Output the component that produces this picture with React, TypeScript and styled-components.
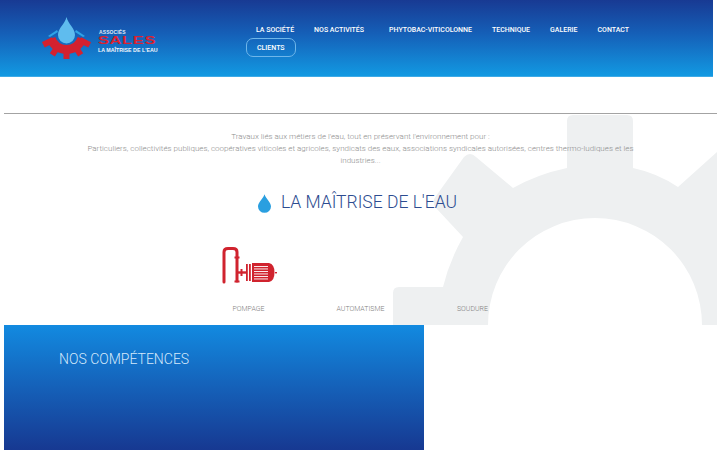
import React from "react";
import styled, { createGlobalStyle } from "styled-components";

const GlobalStyle = createGlobalStyle`
  html, body {
    margin: 0;
    padding: 0;
    background: #fff;
    height: 450px;
    overflow: hidden;
  }
  body {
    font-family: Roboto, "Liberation Sans", sans-serif;
  }
`;

const Page = styled.div`
  position: relative;
  width: 720px;
  height: 450px;
  overflow: hidden;
`;

const Header = styled.header`
  display: flex;
  width: 713px;
  height: 77px;
  box-sizing: border-box;
  padding-left: 42px;
  background: linear-gradient(180deg, #183a93 0%, #1560b8 45%, #1299e2 100%);
  border-bottom: 1px solid #3eaae6;
`;

const Logo = styled.div`
  display: flex;
  width: 204px;
  padding-top: 16px;
  align-items: flex-start;
`;

const LogoText = styled.div`
  display: flex;
  flex-direction: column;
  margin: 13px 0 0 6px;
  font-family: "Liberation Sans", Arial, sans-serif;
  font-weight: 700;
  color: #fff;
`;

const LogoSmall = styled.span`
  font-size: 5px;
  line-height: 6px;
  letter-spacing: 0.1px;
  color: #dfe9f5;
  margin-left: 1px;
`;

const LogoName = styled.span`
  font-size: 11px;
  line-height: 11px;
  letter-spacing: 0.4px;
  color: #dc2230;
  transform: scaleX(1.5);
  transform-origin: left center;
`;

const LogoTag = styled.span`
  font-size: 5.3px;
  line-height: 9px;
  white-space: nowrap;
  color: #f2f6fb;
`;

const Nav = styled.nav`
  display: flex;
  flex-wrap: wrap;
  align-content: flex-start;
  width: 420px;
  padding-top: 21px;
`;

const NavItem = styled.a<{ $boxed?: boolean; $extra?: number }>`
  display: flex;
  align-items: center;
  height: 17px;
  padding: 0 10px;
  margin-right: ${(p) => p.$extra ?? 0}px;
  font-size: 7px;
  font-weight: 500;
  text-transform: uppercase;
  white-space: nowrap;
  color: #fff;
  border: ${(p) => (p.$boxed ? "1px solid #6fb6ea" : "none")};
  border-radius: ${(p) => (p.$boxed ? "7px" : "0")};
`;

const Main = styled.main`
  width: 713px;
  margin-left: 4px;
`;

const Divider = styled.hr`
  margin: 36px 0 0;
  border: 0;
  border-top: 1px solid #a3a3a3;
`;

const GearBackdrop = styled.svg`
  position: absolute;
  left: 380px;
  top: 100px;
`;

const Intro = styled.p`
  position: relative;
  width: 552px;
  margin: 17px auto 0;
  font-size: 8px;
  font-weight: 300;
  line-height: 12px;
  text-align: center;
  color: #8d8d8d;
`;

const Title = styled.h1`
  position: relative;
  display: flex;
  align-items: center;
  justify-content: center;
  gap: 10px;
  margin: 23px 0 0;
  padding-right: 6px;
  height: 24px;
  font-size: 17.5px;
  font-weight: 300;
  white-space: nowrap;
  color: #2d4c90;
`;

const Drop = styled.svg`
  margin-top: 3px;
`;

const Skills = styled.div`
  position: relative;
  display: grid;
  grid-template-columns: repeat(3, 112px);
  justify-content: center;
  margin-top: 31px;
`;

const Skill = styled.div`
  display: flex;
  flex-direction: column;
  align-items: center;
  height: 80px;
`;

const SkillIcon = styled.div`
  height: 40px;
`;

const SkillLabel = styled.span`
  margin-top: 18px;
  font-size: 7px;
  font-weight: 300;
  line-height: 12px;
  color: #808080;
`;

const Panel = styled.section`
  position: relative;
  width: 420px;
  height: 140px;
  box-sizing: border-box;
  padding: 26px 0 0 55px;
  background: linear-gradient(180deg, #128ae0 0%, #1560b8 45%, #172f88 100%);
`;

const PanelTitle = styled.h2`
  margin: 0;
  font-size: 14px;
  font-weight: 300;
  line-height: 17px;
  white-space: nowrap;
  color: #d5e9fb;
`;

const LogoMark = () => (
  <svg width="50" height="46" viewBox="0 0 50 46">
    <g transform="translate(-42 -16)">
      <path d="M48 36 L57 30 L58 32 L50 37Z" fill="#2fa3e6" />
      <path d="M85 36 L76 30 L75 32 L83 37Z" fill="#2fa3e6" />
      <path d="M66.5 17 C68 24 75 28 75 35 A8.5 8.5 0 0 1 58 35 C58 28 65 24 66.5 17Z" fill="#5fbcee" />
      <g fill="#d4212f">
        <path d="M51 38.6 A16.5 16.5 0 0 0 82 38.6" fill="none" stroke="#d4212f" strokeWidth="9" />
        {[0, 33, -33, 63, -63].map((a) => (
          <rect key={a} x="63.5" y="48" width="6" height="11" transform={`rotate(${a} 66.5 33)`} />
        ))}
      </g>
    </g>
  </svg>
);

const PumpIcon = () => (
  <svg width="56" height="40" viewBox="221 246 56 40">
    <g fill="none" stroke="#d0232e">
      <path d="M224 283 V253 Q224 249.500 228 249.500 H233 Q237 249.500 237 253 V282" strokeWidth="3" strokeLinecap="round" />
      <path d="M234.500 258.500 H239.500 M234.500 282.500 H239.500" strokeWidth="2.200" />
      <path d="M238 273.500 H246" strokeWidth="2.400" />
      <path d="M241.500 270 V277" strokeWidth="2" />
    </g>
    <g fill="#d0232e">
      <rect x="246" y="265" width="1.800" height="17" />
      <rect x="249" y="265" width="1.800" height="17" />
      <path d="M252 264 H269 Q274.500 265 274.500 273.500 Q274.500 282 269 283 H252Z" />
      <rect x="275" y="273" width="2" height="1.400" />
    </g>
    <g fill="#fff">
      {[267, 269.500, 272, 274.500, 277, 279.500].map((y) => (
        <rect key={y} x="254" y={y} width="14" height="0.900" />
      ))}
    </g>
  </svg>
);

const items: { label: string; extra?: number }[] = [
  { label: "La société" },
  { label: "Nos activités", extra: 5 },
  { label: "Phytobac-Viticolonne" },
  { label: "Technique" },
  { label: "Galerie" },
  { label: "Contact" },
];

export default function App() {
  return (
    <Page>
      <GlobalStyle />
      <Header>
        <Logo>
          <LogoMark />
          <LogoText>
            <LogoSmall>ASSOCIÉS</LogoSmall>
            <LogoName>SALES</LogoName>
            <LogoTag>LA MAÎTRISE DE L'EAU</LogoTag>
          </LogoText>
        </Logo>
        <Nav>
          {items.map((it) => (
            <NavItem key={it.label} $extra={it.extra}>
              {it.label}
            </NavItem>
          ))}
          <NavItem $boxed>Clients</NavItem>
        </Nav>
      </Header>
      <GearBackdrop width="337" height="225" viewBox="380 100 337 225">
        <path
          fill="#eef0f1"
          d="M393 325 V293 Q393 287 399 287 H443 Q449 262 463 237 L436 208 Q431 202 436 196 L464 157 Q470 151 476 157 L513 188 Q538 174 567 168 V121 Q567 115 573 115 H627 Q633 115 633 121 V168 Q657 173 678 187 L717 152 V325 H702 A107 107 0 0 0 488 325 Z"
        />
      </GearBackdrop>
      <Main>
        <Divider />
        <Intro>
          Travaux liés aux métiers de l'eau, tout en préservant l'environnement pour :
          <br />
          Particuliers, collectivités publiques, coopératives viticoles et agricoles, syndicats des eaux, associations syndicales autorisées, centres thermo-ludiques et les industries...
        </Intro>
        <Title>
          <Drop width="13" height="19" viewBox="0 0 14 20">
            <path d="M7 0 C8.500 5 14 8.500 14 13.200 A7 6.800 0 0 1 0 13.200 C0 8.500 5.500 5 7 0Z" fill="#2a9fe0" />
          </Drop>
          LA MAÎTRISE DE L'EAU
        </Title>
        <Skills>
          <Skill>
            <SkillIcon>
              <PumpIcon />
            </SkillIcon>
            <SkillLabel>POMPAGE</SkillLabel>
          </Skill>
          <Skill>
            <SkillIcon />
            <SkillLabel>AUTOMATISME</SkillLabel>
          </Skill>
          <Skill>
            <SkillIcon />
            <SkillLabel>SOUDURE</SkillLabel>
          </Skill>
        </Skills>
        <Panel>
          <PanelTitle>NOS COMPÉTENCES</PanelTitle>
        </Panel>
      </Main>
    </Page>
  );
}
